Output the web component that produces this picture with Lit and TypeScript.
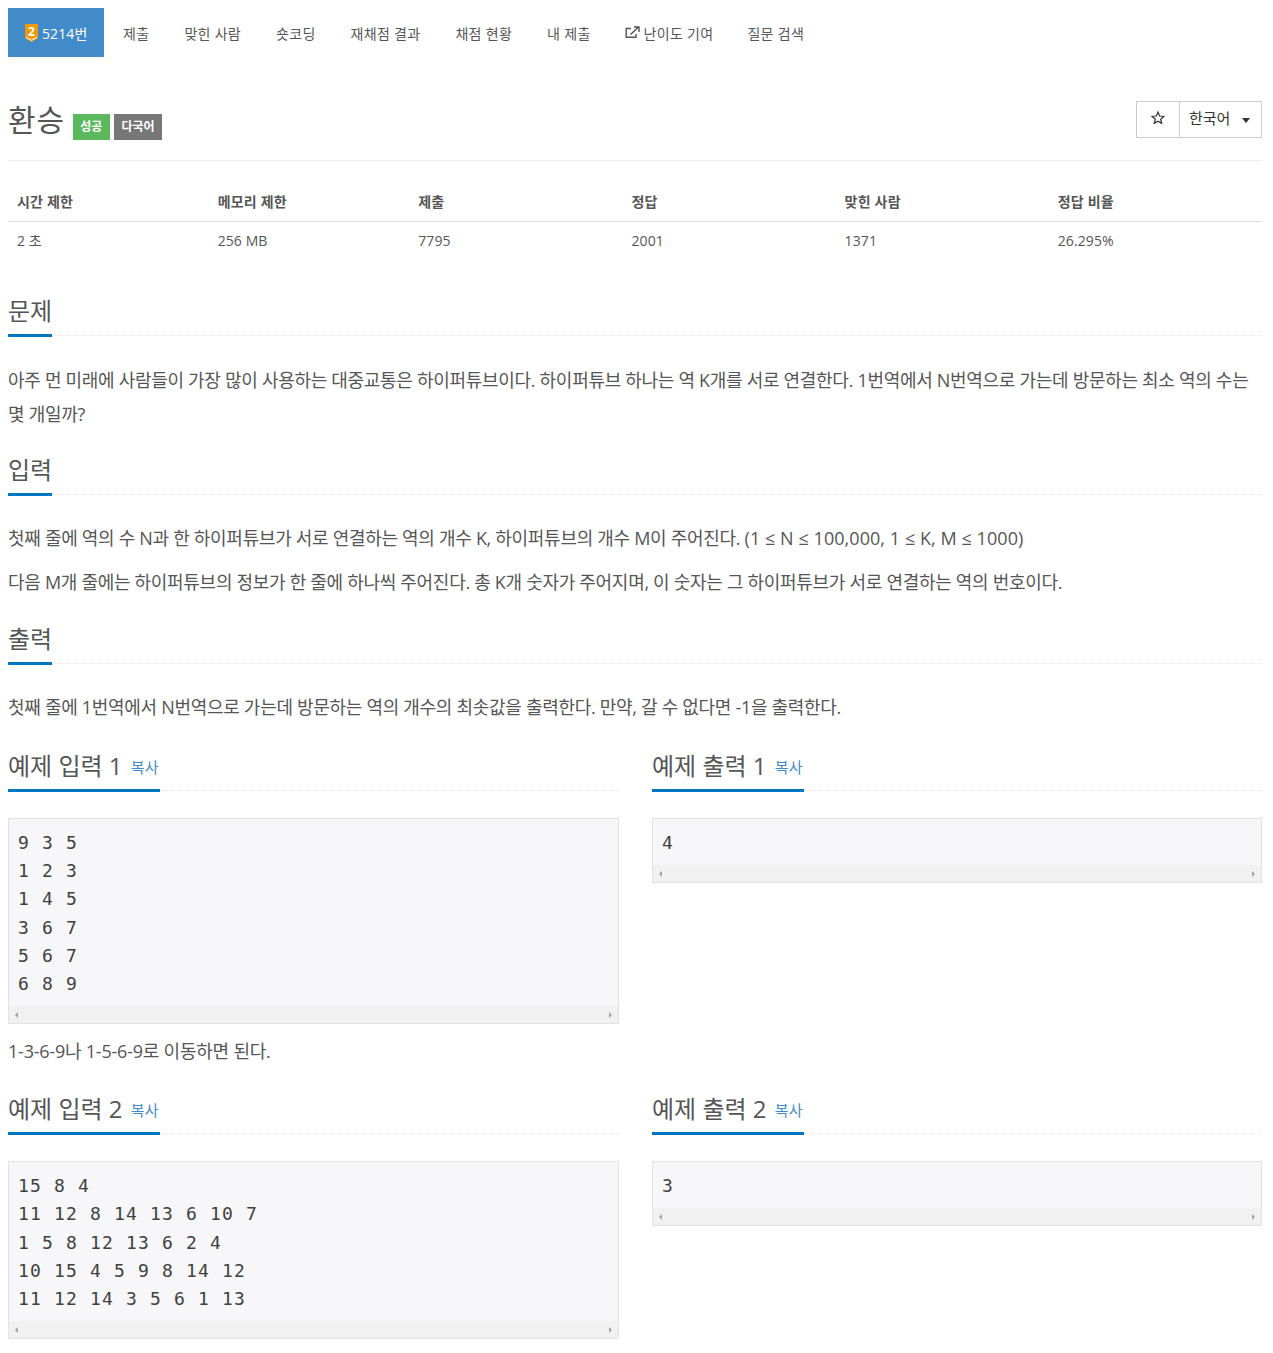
import { LitElement, html, css } from "lit";
import { customElement } from "lit/decorators.js";

const tabs = ["제출", "맞힌 사람", "숏코딩", "재채점 결과", "채점 현황", "내 제출"];

@customElement("app-root")
export class AppRoot extends LitElement {
  static styles = css`
    :host { display: block; background: #fff; color: #555; font-family: "Open Sans", "Noto Sans CJK KR", sans-serif; font-size: 14px; }
    .page { padding: 8px 11px 14px 8px; box-sizing: border-box; }
    .nav { display: flex; height: 49px; align-items: stretch; }
    .nav a { display: flex; align-items: center; padding: 0 17.5px; font-size: 14px; letter-spacing: 0.3px; color: #555; white-space: nowrap; }
    .nav a.active { background: #428bca; color: #fff; padding: 0 16px 0 17px; margin-right: 2px; letter-spacing: 0.12px; }
    .nav a.contrib { padding-right: 16.5px; }
    .tier { margin-right: 4px; }
    .ext { margin: 0 4px 0 -1px; }
    .head { display: flex; align-items: flex-start; justify-content: space-between; margin-top: 44px; height: 60px; box-sizing: border-box; border-bottom: 1px solid #eee; }
    .title { display: flex; align-items: flex-start; }
    h1 { margin: 0; font-size: 30px; font-weight: 400; line-height: 38px; letter-spacing: 0.8px; }
    .badge { display: inline-block; font-size: 12px; font-weight: 700; line-height: 26px; height: 26px; padding: 0 7.5px; color: #fff; margin-left: 4px; margin-top: 13px; }
    .badge.first { margin-left: 8px; }
    .ok { background: #5cb85c; }
    .lang { background: #777; }
    .btns { display: flex; height: 37px; border: 1px solid #ccc; box-sizing: border-box; color: #333; }
    .star { width: 43px; display: flex; align-items: center; justify-content: center; border-right: 1px solid #ccc; box-sizing: border-box; padding-bottom: 4px; }
    .sel { width: 81px; display: flex; align-items: center; padding: 0 0 5px 9px; box-sizing: border-box; font-size: 15px; }
    .caret { width: 0; height: 0; border: 4.5px solid transparent; border-top: 5px solid #333; border-bottom: 0; margin-left: 12px; margin-top: 6px; }
    table { width: 100%; border-collapse: collapse; table-layout: fixed; margin-top: 21px; font-size: 14px; letter-spacing: 0.2px; }
    th { text-align: left; font-weight: 700; padding: 0 9px 1px; height: 39px; box-sizing: border-box; border-bottom: 1px solid #ddd; }
    td { padding: 0 9px; height: 38px; box-sizing: border-box; letter-spacing: 0.1px; }
    .h { display: block; border-bottom: 1px dotted #e5e5e5; height: 42px; box-sizing: border-box; }
    .h h2 { display: inline-block; margin: 0; font-weight: 400; border-bottom: 3px solid #0076c0; font-size: 24px; line-height: 33px; height: 43px; box-sizing: border-box; white-space: nowrap; }
    .h h2 small { font-size: 15px; line-height: 1; margin-left: 2px; margin-right: 1px; color: #428bca; font-weight: 400; vertical-align: 2px; letter-spacing: 0.3px; }
    p { margin: 0; font-size: 18px; line-height: 34px; letter-spacing: -0.3px; }
    .plain { letter-spacing: 0.06px; }
    .note { letter-spacing: -0.22px; margin-top: 10px; }
    .desc { margin-top: 26px; }
    .first-desc { margin-top: 27px; }
    .grid { display: grid; grid-template-columns: 611px 610px; column-gap: 33px; align-items: start; }
    .sample { margin-top: 27px; }
    pre { margin: 0; background: #f7f7f9; border: 1px solid #e1e1e8; }
    pre .code { display: block; padding: 10px 9px 8px; line-height: 28.2px; color: #404040; font-family: "DejaVu Sans Mono", monospace; font-size: 18px; letter-spacing: 1.16px; white-space: pre; }
    .bar { display: flex; align-items: center; justify-content: space-between; height: 17px; background: #f1f1f1; padding: 0 6px; box-sizing: border-box; }
    .bar i { display: block; width: 0; height: 0; border: 3.5px solid transparent; }
    .bar i.l { border-right-color: #a3a3a3; border-left: 0; }
    .bar i.r { border-left-color: #a3a3a3; border-right: 0; }
    .s1 { margin-top: 35px; }
    .s2 { margin-top: 22px; }
    .s3 { margin-top: 23px; }
    .s4 { margin-top: 25px; }
    .s5 { margin-top: 24px; }
    .gap { margin-top: 10px; }
  `;

  private sampleHead(t: string, n: number) {
    return html`<div class="h"><h2>${t} ${n} <small>복사</small></h2></div>`;
  }

  private pre(code: string) {
    return html`<div class="sample"><pre><span class="code">${code}</span><div class="bar"><i class="l"></i><i class="r"></i></div></pre></div>`;
  }

  render() {
    return html`<div class="page">
      <nav class="nav">
        <a class="active"><svg class="tier" width="13" height="18" viewBox="0 0 13 18"><path d="M0 0h13v14l-6.5 4L0 14z" fill="#f09a0a"/><path d="M1 13.5l5.5 2.8 5.5-2.8" stroke="#fff" stroke-width="1" fill="none"/><text x="6.5" y="11.5" font-size="12" font-weight="700" fill="#fff" text-anchor="middle" font-family="Open Sans">2</text></svg>5214번</a>
        ${tabs.map((t) => html`<a>${t}</a>`)}
        <a class="contrib"><svg class="ext" width="15" height="13" viewBox="0 0 15 13" fill="none" stroke="#555" stroke-width="1.4"><path d="M11 8v3.3H1.2V2.5H6"/><path d="M5.5 8.5L13 1.5M9 1h5v5" /></svg>난이도 기여</a>
        <a>질문 검색</a>
      </nav>
      <div class="head">
        <div class="title"><h1>환승</h1><span class="badge ok first">성공</span><span class="badge lang">다국어</span></div>
        <div class="btns"><div class="star"><svg width="14" height="13" viewBox="0 0 24 23" fill="none" stroke="#333" stroke-width="2.2"><path d="M12 2l3 6.9 7.5.7-5.7 5 1.7 7.3L12 18l-6.5 3.9 1.7-7.3-5.7-5 7.5-.7z"/></svg></div><div class="sel">한국어<span class="caret"></span></div></div>
      </div>
      <table>
        <colgroup><col style="width:16%"/><col style="width:16%"/><col style="width:17%"/><col style="width:17%"/><col style="width:17%"/><col style="width:17%"/></colgroup>
        <tr><th>시간 제한</th><th>메모리 제한</th><th>제출</th><th>정답</th><th>맞힌 사람</th><th>정답 비율</th></tr>
        <tr><td>2 초</td><td>256 MB</td><td>7795</td><td>2001</td><td>1371</td><td>26.295%</td></tr>
      </table>
      <section class="s1">
        <div class="h"><h2>문제</h2></div>
        <p class="first-desc">아주 먼 미래에 사람들이 가장 많이 사용하는 대중교통은 하이퍼튜브이다. 하이퍼튜브 하나는 역 K개를 서로 연결한다. 1번역에서 N번역으로 가는데 방문하는 최소 역의 수는 몇 개일까?</p>
      </section>
      <section class="s2">
        <div class="h"><h2>입력</h2></div>
        <p class="desc">첫째 줄에 역의 수 N과 한 하이퍼튜브가 서로 연결하는 역의 개수 K, 하이퍼튜브의 개수 M이 주어진다. <span class="plain">(1 ≤ N ≤ 100,000, 1 ≤ K, M ≤ 1000)</span></p>
        <p class="gap">다음 M개 줄에는 하이퍼튜브의 정보가 한 줄에 하나씩 주어진다. 총 K개 숫자가 주어지며, 이 숫자는 그 하이퍼튜브가 서로 연결하는 역의 번호이다.</p>
      </section>
      <section class="s3">
        <div class="h"><h2>출력</h2></div>
        <p class="desc">첫째 줄에 1번역에서 N번역으로 가는데 방문하는 역의 개수의 최솟값을 출력한다. 만약, 갈 수 없다면 -1을 출력한다.</p>
      </section>
      <div class="grid s4">
        <div>${this.sampleHead("예제 입력", 1)}${this.pre("9 3 5\n1 2 3\n1 4 5\n3 6 7\n5 6 7\n6 8 9")}<p class="note">1-3-6-9나 1-5-6-9로 이동하면 된다.</p></div>
        <div>${this.sampleHead("예제 출력", 1)}${this.pre("4")}</div>
      </div>
      <div class="grid s5">
        <div>${this.sampleHead("예제 입력", 2)}${this.pre("15 8 4\n11 12 8 14 13 6 10 7\n1 5 8 12 13 6 2 4\n10 15 4 5 9 8 14 12\n11 12 14 3 5 6 1 13")}</div>
        <div>${this.sampleHead("예제 출력", 2)}${this.pre("3")}</div>
      </div>
    </div>`;
  }
}
